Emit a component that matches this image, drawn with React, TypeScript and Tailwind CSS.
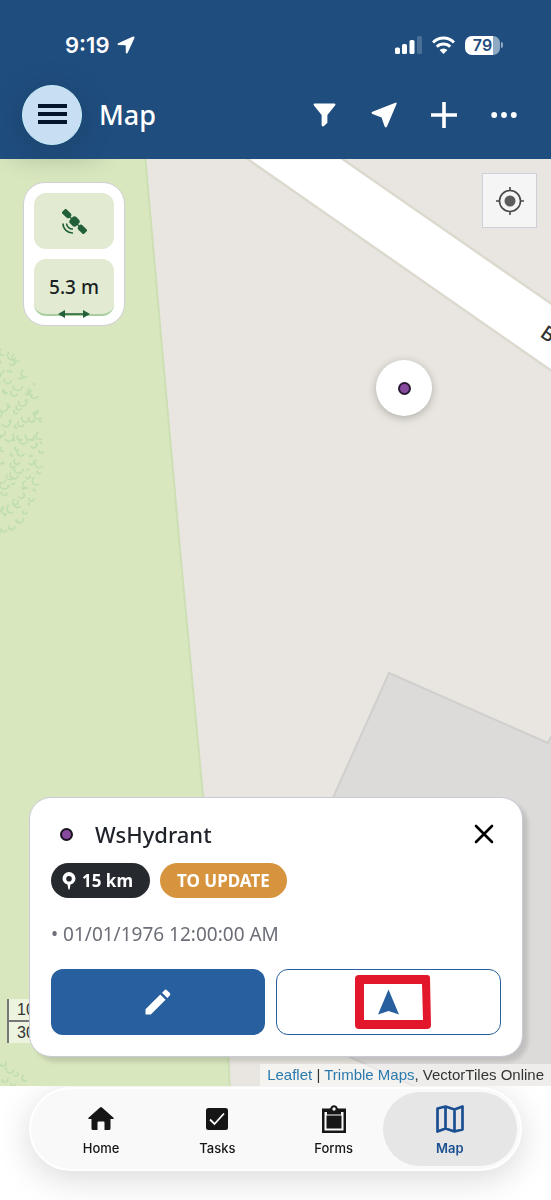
import type { ReactNode } from "react";

// small leaf arcs that fill the wooded part of the park
const leaves = Array.from({ length: 170 }, (_, i) => {
  const angle = i * 2.39996;
  const radius = Math.sqrt((i + 1) / 170);
  const jitter = ((i * 37) % 11) - 5;
  return {
    x: Math.cos(angle) * radius * 45 + jitter * 0.5,
    y: 283 + Math.sin(angle) * radius * 93 + jitter,
    turn: 140 + ((i * 67) % 110),
    size: 0.6 + ((i * 7) % 9) * 0.5,
  };
}).filter((leaf) => leaf.x > -4);

const lowerLeaves = [
  { x: 3, y: 904, turn: 160, size: 3 },
  { x: 10, y: 910, turn: 200, size: 4 },
  { x: 16, y: 915, turn: 140, size: 2 },
  { x: 25, y: 919, turn: 240, size: 3 },
  { x: 5, y: 920, turn: 170, size: 3 },
  { x: 13, y: 925, turn: 190, size: 2 },
];

function MapCanvas() {
  return (
    <svg
      className="absolute inset-0 h-full w-full"
      viewBox="0 0 551 927"
      preserveAspectRatio="xMidYMid slice"
      aria-hidden="true"
    >
      <rect width="551" height="927" fill="#e9e6e1" />
      <path d="M-5 -5H145L163 200L181 401L203 637L228 893L230 932H-5Z" fill="#d8e7be" stroke="#cddfb4" strokeWidth="2" />
      <g fill="none" stroke="#bcdbb0" strokeLinecap="round" strokeWidth="1.6" opacity=".85">
        {[...leaves, ...lowerLeaves].map((leaf, i) => (
          <path
            key={i}
            d={`M${-leaf.size} 0a${leaf.size} ${leaf.size} 0 0 1 ${leaf.size * 2} 0`}
            transform={`translate(${leaf.x} ${leaf.y}) rotate(${leaf.turn})`}
          />
        ))}
      </g>
      <path d="M246 -1L556 215V148L341 -1Z" fill="#fff" stroke="#dcdace" strokeWidth="2.500" />
      <text
        x="539"
        y="177"
        transform="rotate(34 539 177)"
        className="font-['Noto_Sans'] text-[20px] font-medium"
        fill="#333"
      >
        B
      </text>
      <path
        d="M389 514L548 584L556 568V992L414 927L239 848Z"
        fill="#dcdbd9"
        stroke="#d0cfcd"
        strokeWidth="2"
      />
    </svg>
  );
}

function StatusBar() {
  return (
    <div className="flex h-[30px] items-center justify-between pr-12 pl-[65px] text-white">
      <div className="flex items-center gap-2">
        <span className="font-['Inter'] text-[22px] leading-[30px] font-semibold">9:19</span>
        <svg width="18" height="18" viewBox="0 0 19 19" fill="currentColor" aria-hidden="true">
          <path d="M17 .5L1.2 7.7C.1 8.2 .4 9.6 1.6 9.6L8.6 9.8Q9.2 9.8 9.2 10.5L9.3 17.3C9.3 18.6 10.8 18.9 11.3 17.8L18.4 2.1C18.9 1 18 .1 17 .5Z" />
        </svg>
      </div>
      <div className="flex items-center gap-2.5">
        <svg width="27" height="18" viewBox="0 0 27 18" fill="currentColor" aria-hidden="true">
          <rect y="11.500" width="5" height="6.500" rx="1.500" />
          <rect x="7" y="8" width="5" height="10" rx="1.500" />
          <rect x="14.500" y="4" width="5" height="14" rx="1.500" />
          <rect x="22" y="0" width="5" height="18" rx="1.500" opacity=".2" />
        </svg>
        <svg width="23" height="18" viewBox="0 0 23 18" fill="none" stroke="currentColor" strokeWidth="3" aria-hidden="true">
          <path d="M1 6.500A14.500 14.500 0 0 1 22 6.500" />
          <path d="M4.800 10.800A9.500 9.500 0 0 1 18.200 10.800" />
          <path d="M11.500 18L7.600 14A5.500 5.500 0 0 1 15.400 14Z" fill="currentColor" stroke="none" />
        </svg>
        <div className="flex items-center gap-px">
          <span className="flex h-[19px] w-[35px] items-center justify-center rounded-[7px] bg-linear-to-r from-white from-79% to-[#8fa9c3] to-79% font-['Inter'] text-base leading-none font-semibold text-[#1f4d7e]">
            79
          </span>
          <span className="h-1.5 w-0.5 rounded-r-full bg-[#8fa9c3]" />
        </div>
      </div>
    </div>
  );
}

function ToolButton({ label, children }: { label: string; children: ReactNode }) {
  return (
    <button type="button" aria-label={label} className="flex size-11 items-center justify-center">
      {children}
    </button>
  );
}

function Header() {
  return (
    <header className="relative bg-[#1f4d7e] pt-[30px] pb-3.5">
      <StatusBar />
      <div className="mt-[25px] flex items-center justify-between pr-[25px] pl-[22px] text-white">
        <div className="flex items-center gap-[17px]">
          <button
            type="button"
            aria-label="Menu"
            className="flex size-[60px] flex-col items-center justify-center gap-1 rounded-full border border-[#c5eef5] bg-[#c8def3] pb-0.5 shadow-[0_6px_36px_rgba(0,0,0,0.14)]"
          >
            <span className="h-1 w-[29px] bg-[#04152a]" />
            <span className="h-1 w-[29px] bg-[#04152a]" />
            <span className="h-1 w-[29px] bg-[#04152a]" />
          </button>
          <h1 className="font-['Noto_Sans'] text-[27px] leading-8 font-medium">Map</h1>
        </div>
        <div className="flex items-center gap-4">
          <ToolButton label="Filter">
            <svg width="23" height="24" viewBox="0 0 24 25" fill="currentColor">
              <path d="M2 .5H22Q24.200 .5 23 2.500L15 12.500V20.500L11.500 24Q9 25.500 9 22.500V12.500L1 2.500Q-.2 .5 2 .5Z" />
            </svg>
          </ToolButton>
          <ToolButton label="Locate">
            <svg width="26" height="26" viewBox="0 0 27 27" fill="currentColor">
              <path d="M25.300 .7L1.500 10.200Q-.5 11.200 1.500 12.500L11 16L14 25.300Q15.300 27.500 16.600 25.500L26.500 2.200Q27 .2 25.300 .7Z" />
            </svg>
          </ToolButton>
          <ToolButton label="Add">
            <svg width="26" height="26" viewBox="0 0 26 26" fill="currentColor">
              <path d="M11.200 0H14.800V11.200H26V14.800H14.800V26H11.200V14.800H0V11.200H11.200Z" />
            </svg>
          </ToolButton>
          <ToolButton label="More">
            <svg width="26" height="6" viewBox="0 0 26 6" fill="currentColor">
              <circle cx="3.200" cy="3" r="2.900" />
              <circle cx="13" cy="3" r="2.900" />
              <circle cx="22.800" cy="3" r="2.900" />
            </svg>
          </ToolButton>
        </div>
      </div>
    </header>
  );
}

function MapControls() {
  return (
    <div className="relative flex items-start justify-between pt-3.5 pr-3.5 pl-[23px]">
      <div className="mt-[9px] flex w-[102px] flex-col gap-2.5 rounded-[22px] border border-[#cfcfd9] bg-white p-2.5 pb-[9px]">
        <button
          type="button"
          aria-label="GPS status"
          className="flex h-14 items-center justify-center rounded-xl bg-[#e2ebd2] text-[#226039]"
        >
          <svg width="25" height="25" viewBox="0 0 25 25" fill="currentColor">
            <g transform="rotate(45 12.500 12.500)">
              <path d="M-3 9.500H4Q6.500 9.500 6.500 12.500Q6.500 15.500 4 15.500H-3Z" />
              <rect x="8" y="8" width="9" height="9" rx="3" />
              <path d="M28 9.500H21Q18.500 9.500 18.500 12.500Q18.500 15.500 21 15.500H28Z" />
              <path d="M6 11.800H9V13.200H6ZM16 11.800H19V13.200H16Z" />
            </g>
            <path d="M1 14.500A9.500 9.500 0 0 0 11 24M4.500 14.500A6 6 0 0 0 11 20" fill="none" stroke="currentColor" strokeWidth="1.600" />
          </svg>
        </button>
        <div className="relative flex h-[57px] justify-center rounded-xl border-b-2 border-[#a9cf9f] bg-[#e2ebd2] pt-3">
          <span className="font-['Noto_Sans'] text-[19px] leading-8 font-medium text-[#1a1f24]">5.3 m</span>
          <svg className="absolute -bottom-1 left-6" width="32" height="8" viewBox="0 0 32 8" fill="#226039" aria-hidden="true">
            <path d="M0 4L7 0V3.200H25V0L32 4L25 8V4.800H7V8Z" />
          </svg>
        </div>
      </div>
      <button
        type="button"
        aria-label="Center on my location"
        className="flex size-[55px] items-center justify-center border border-[#cfcfdb] bg-[#f5f5f5]"
      >
        <svg width="28" height="28" viewBox="0 0 28 28" fill="none" stroke="#484848" strokeWidth="1.600">
          <circle cx="14" cy="14" r="10.500" />
          <circle cx="14" cy="14" r="5.500" fill="#5c5c5c" stroke="none" />
          <path d="M14 0V4M14 24V28M0 14H4M24 14H28" />
        </svg>
      </button>
    </div>
  );
}

function AssetCard() {
  return (
    <section className="relative mt-auto mr-7 mb-[29px] ml-[29px] rounded-[22px] border border-[#c9cad6] bg-white px-[21px] pt-5 pb-[21px] font-['Noto_Sans'] shadow-[5px_5px_4px_rgba(0,0,0,0.12)]">
      <div className="flex items-center justify-between pr-[7px] pl-[9px]">
        <div className="flex items-center gap-[22px]">
          <span className="size-[13px] rounded-full border-2 border-[#17131d] bg-[#874a9e]" />
          <h2 className="text-[22px] leading-8 font-medium text-[#1e2229]">WsHydrant</h2>
        </div>
        <button type="button" aria-label="Close">
          <svg width="20" height="20" viewBox="0 0 20 20" fill="none" stroke="#000" strokeWidth="2.600" strokeLinecap="round">
            <path d="M2 2L18 18M18 2L2 18" />
          </svg>
        </button>
      </div>
      <div className="mt-[13px] flex gap-2.5 text-[17px] leading-[35px] font-bold text-white">
        <span className="flex items-center gap-1.5 rounded-full bg-[#26292e] pr-[17px] pl-[11px]">
          <svg width="14" height="18" viewBox="0 0 14 18" fill="currentColor" aria-hidden="true">
            <path
              fillRule="evenodd"
              d="M7 0A6.500 6.500 0 0 1 13.500 6.500C13.500 9.500 11.500 11.800 8.500 12.600L7.700 17Q7 18.500 6.300 17L5.500 12.600C2.500 11.800 .5 9.500 .5 6.500A6.500 6.500 0 0 1 7 0ZM7 4A2.800 2.800 0 1 0 7 9.600A2.800 2.800 0 1 0 7 4Z"
            />
          </svg>
          15 km
        </span>
        <span className="rounded-full bg-[#d7943e] px-[17px]">TO UPDATE</span>
      </div>
      <p className="mt-5 text-[19px] leading-8 text-[#6c6e78]">• 01/01/1976 12:00:00 AM</p>
      <div className="mt-[19px] grid grid-cols-[214fr_224fr] gap-[11px]">
        <button
          type="button"
          aria-label="Edit"
          className="flex h-[66px] items-center justify-center rounded-xl bg-[#285f9e] text-white"
        >
          <svg width="26" height="26" viewBox="0 0 26 26" fill="currentColor">
            <path d="M.5 20.200L15.300 5.400L20.600 10.700L5.800 25.500H.5Z" />
            <path d="M17 3.700L19.500 1.200Q20.700 0 21.900 1.200L24.800 4.100Q26 5.300 24.800 6.500L22.300 9Z" />
          </svg>
        </button>
        <button
          type="button"
          aria-label="Navigate"
          className="flex h-[66px] items-center justify-center rounded-xl border-[1.5px] border-[#285f9e] bg-white"
        >
          <svg width="85" height="54" viewBox="-9 0 85 54">
            <path
              fillRule="evenodd"
              fill="#e3172b"
              d="M4 0H72Q75 0 75 3L76 50Q76 54 72 54H4Q0 54 0 50V4Q0 0 4 0ZM9 9V45H68L67 9Z"
            />
            <path d="M33.500 14.500L44 39.500L33.500 36L23 39.500Z" fill="#285f9e" />
          </svg>
        </button>
      </div>
    </section>
  );
}

function NavItem({ label, active, children }: { label: string; active?: boolean; children: ReactNode }) {
  return (
    <a
      href="#"
      aria-current={active ? "page" : undefined}
      className={`flex h-[74px] flex-1 flex-col items-center gap-[5px] rounded-full pt-3 font-['Inter'] text-[13px] leading-5 ${
        active ? "bg-[#e6e6e6] font-semibold text-[#1b4f91]" : "font-medium text-[#161616]"
      }`}
    >
      <span className="flex h-[29px] items-center justify-center">{children}</span>
      {label}
    </a>
  );
}

function BottomNav() {
  return (
    <footer className="relative overflow-hidden bg-white pt-px pr-[29px] pb-[29px] pl-[29px]">
      <nav className="flex -space-x-[18px] rounded-full border-2 border-white bg-[#f9f9f9] p-[3px] shadow-[0_8px_34px_rgba(0,0,0,0.15)]">
        <NavItem label="Home">
          <svg width="26" height="23" viewBox="0 0 26 23" fill="currentColor">
            <path d="M12 .5Q13 -.4 14 .5L25.500 10.800Q26.300 12 25 12H22.500V21.500Q22.500 23 21 23H16.500V15.500Q16.500 14.500 15.500 14.500H10.500Q9.500 14.500 9.500 15.500V23H5Q3.500 23 3.500 21.500V12H1Q-.3 12 .5 10.800Z" />
          </svg>
        </NavItem>
        <NavItem label="Tasks">
          <svg width="22" height="22" viewBox="0 0 22 22">
            <rect width="22" height="22" rx="2.500" fill="currentColor" />
            <path d="M4 11.500L8.500 16L18 5.500" fill="none" stroke="#fff" strokeWidth="1.800" />
          </svg>
        </NavItem>
        <NavItem label="Forms">
          <svg width="24" height="28" viewBox="0 0 24 28">
            <path d="M0 3.500H7.500L8.500 3A3.600 3.600 0 0 1 15.500 3L16.500 3.500H24V28H0Z" fill="currentColor" />
            <path d="M5 7H2.500V25.500H21.500V7H19V9.500H5Z" fill="#f9f9f9" />
            <rect x="4.500" y="10.500" width="15" height="13" fill="currentColor" />
            <circle cx="12" cy="4" r="1.700" fill="#f9f9f9" />
          </svg>
        </NavItem>
        <NavItem label="Map" active>
          <svg width="28" height="28" viewBox="0 0 28 28" fill="none" stroke="currentColor" strokeWidth="2.700" strokeLinejoin="round">
            <path d="M1.500 3.500L9.500 1.500L18.500 4.500L26.500 1.500V24.500L18.500 26.500L9.500 23.500L1.500 26.500ZM9.500 1.500V23.500M18.500 4.500V26.500" />
          </svg>
        </NavItem>
      </nav>
    </footer>
  );
}

export default function App() {
  return (
    <div className="flex min-h-screen flex-col bg-white">
      <Header />
      <main className="relative flex flex-1 flex-col overflow-hidden">
        <MapCanvas />
        <div className="absolute -top-11 left-2 h-10 w-24 rounded-full shadow-[0_4px_24px_rgba(0,0,0,0.16)]" />
        <MapControls />

        {/* selected hydrant */}
        <div className="absolute top-[201px] right-[119px] flex size-14 items-center justify-center rounded-full bg-white shadow-[0_2px_8px_rgba(0,0,0,0.25)]">
          <span className="size-[13px] rounded-full border-2 border-[#2a1a38] bg-[#874a9e]" />
        </div>

        <div className="absolute bottom-[43px] left-[7px] w-14 border-l-2 border-[#777] font-['Liberation_Sans'] text-base leading-[21px] text-[#333]">
          <div className="border-b-2 border-[#777] bg-white/50 pl-2">10 m</div>
          <div className="bg-white/50 pl-2">30 ft</div>
        </div>

        <AssetCard />

        <div className="absolute right-0 bottom-0 bg-white/50 px-[7px] font-['Liberation_Sans'] text-[15px] leading-[22px] text-[#333]">
          <a href="#" className="text-[#2a7aad]">Leaflet</a> |{" "}
          <a href="#" className="text-[#2a7aad]">Trimble Maps</a>, VectorTiles Online
        </div>
      </main>
      <BottomNav />
    </div>
  );
}
